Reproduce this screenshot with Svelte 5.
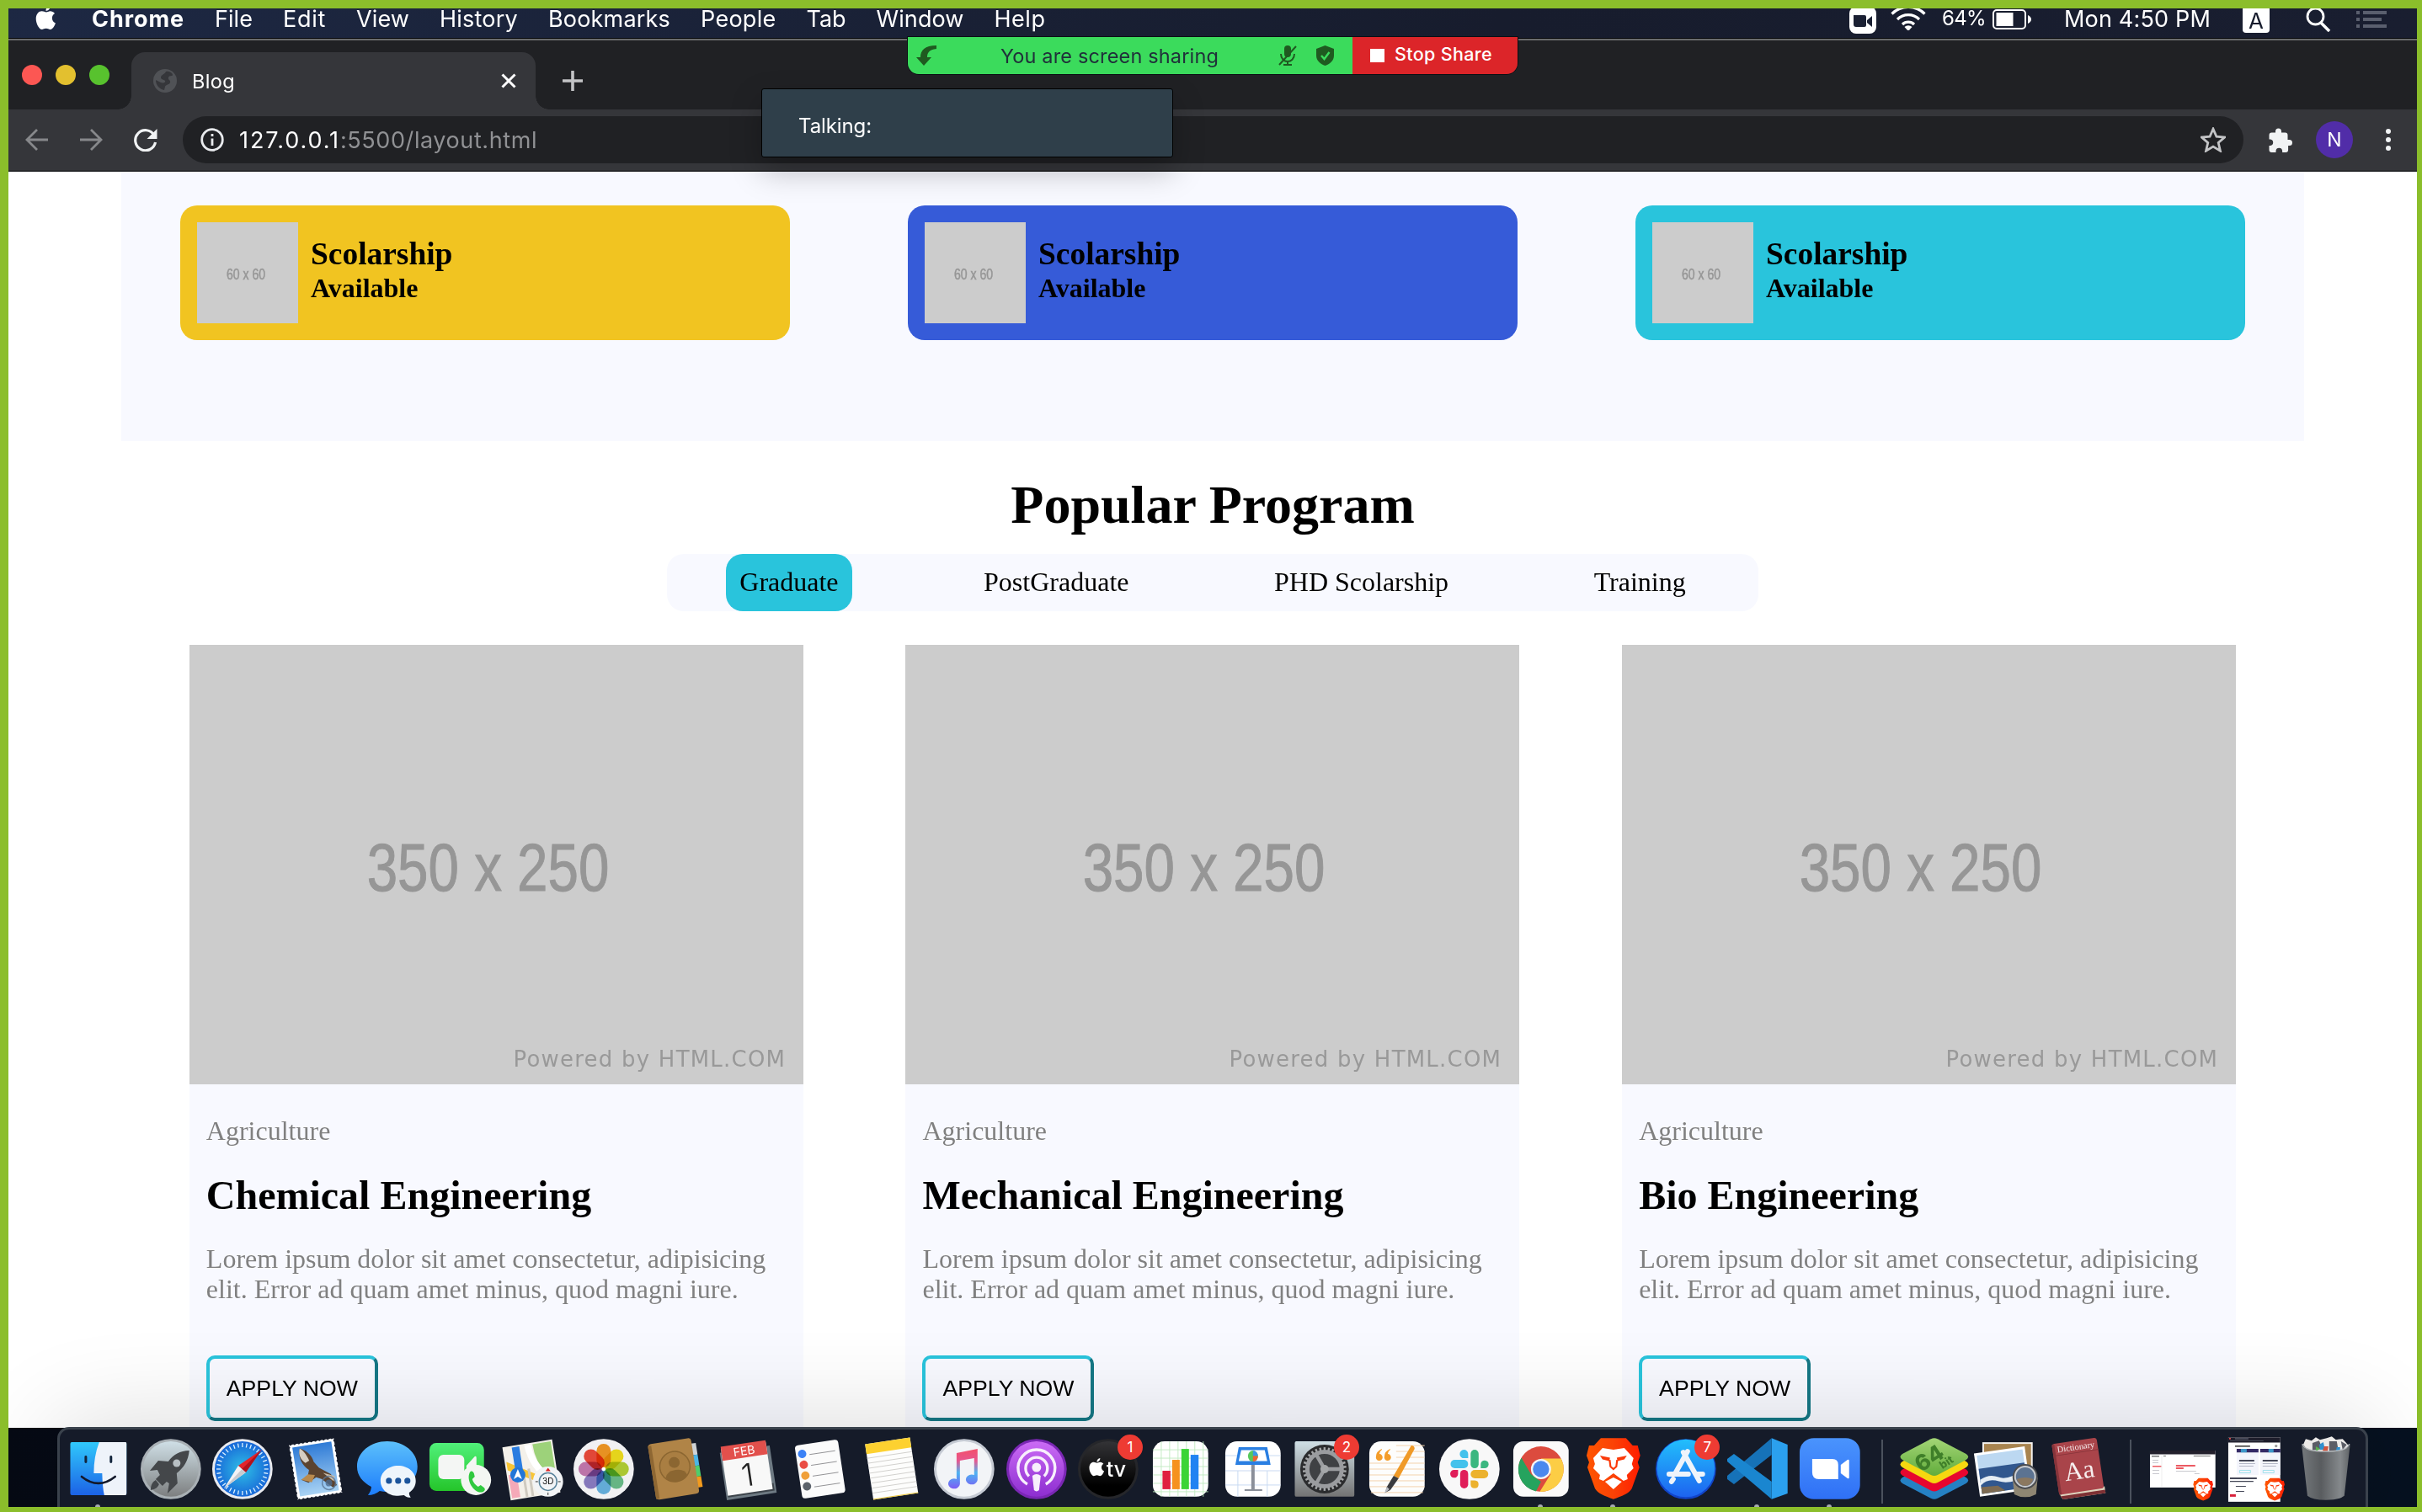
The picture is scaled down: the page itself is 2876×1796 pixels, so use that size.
<script>
  const menus = [
    { label: 'Chrome', width: 110, strong: true },
    { label: 'File', width: 45 },
    { label: 'Edit', width: 51 },
    { label: 'View', width: 63 },
    { label: 'History', width: 93 },
    { label: 'Bookmarks', width: 145 },
    { label: 'People', width: 89.5 },
    { label: 'Tab', width: 47 },
    { label: 'Window', width: 104 },
    { label: 'Help', width: 61 }
  ];

  const scholarships = [
    { tone: 'yellow' },
    { tone: 'blue' },
    { tone: 'cyan' }
  ];

  const tabs = ['Graduate', 'PostGraduate', 'PHD Scolarship', 'Training'];
  const programs = ['Chemical Engineering', 'Mechanical Engineering', 'Bio Engineering'];

  const dock = [
    { id: 'finder', running: true },
    { id: 'launchpad' },
    { id: 'safari' },
    { id: 'mail' },
    { id: 'messages' },
    { id: 'facetime' },
    { id: 'maps' },
    { id: 'photos' },
    { id: 'contacts' },
    { id: 'calendar' },
    { id: 'reminders' },
    { id: 'notes' },
    { id: 'music' },
    { id: 'podcasts' },
    { id: 'tv', badge: '1' },
    { id: 'numbers' },
    { id: 'keynote' },
    { id: 'settings', badge: '2' },
    { id: 'pages' },
    { id: 'slack' },
    { id: 'chrome', running: true },
    { id: 'brave', running: true },
    { id: 'appstore', badge: '7' },
    { id: 'vscode', running: true },
    { id: 'zoom', running: true },
    { id: 'separator' },
    { id: 'unarchiver' },
    { id: 'preview' },
    { id: 'dictionary' },
    { id: 'separator' },
    { id: 'window-wide' },
    { id: 'window-tall' },
    { id: 'trash' }
  ];

  const petals = [
    '#f59a23', '#f3e11d', '#b5d334', '#6cc08b', '#69b5e2', '#8d7fc4', '#c77bb0', '#ee4b3a'
  ];
  const ticks = Array.from({ length: 36 }, (_, i) => i * 10);
  const teeth = Array.from({ length: 30 }, (_, i) => i * 12);
  const stampEdge = Array.from({ length: 11 }, (_, i) => i);

  // Spreads a label's letters so that it fills the given width.
  function fit(node, width) {
    const natural = node.getBoundingClientRect().width;
    node.style.letterSpacing = (width - natural) / node.textContent.length + 'px';
  }
</script>

{#snippet lion()}
  <path d="M28 10h30l8 9 6 0 3 12-3 8 2 6-9 25c-3 6-12 9-22 13-10-4-19-7-22-13L12 45l2-6-3-8 3-12 6 0z" fill="url(#gBrave)" />
  <path d="M30 22l13 2 13-2 11 12-2 7 2 5-8 8 1 5-5 2-12-9-12 9-5-2 1-5-8-8 2-5-2-7z" fill="#fff" />
  <path d="M27 31l12 2.500-1 4-8-2zM59 31l-12 2.500 1 4 8-2z" fill="#fb3a0a" />
  <path d="M38.500 36l1 8 3.500 3 3.500-3 1-8" fill="none" stroke="#fb3a0a" stroke-width="2.200" />
  <path d="M43 57l10 5-10 9-10-9z" fill="#fff" />
{/snippet}

{#snippet apple()}
  <path d="M17.500 6.200c-1.700 0-3.300 1.300-4.600 1.300S9.600 6.300 7.700 6.300C4 6.300.7 9.700.7 15.200c0 6 3.900 12.800 7.100 12.800 1.600 0 2.700-1.200 4.900-1.200s3 1.200 4.800 1.200c2.900 0 5.500-4.600 6.400-7.600-2.400-1-4-3.200-4-6 0-2.400 1.200-4.300 3.100-5.500-1.300-1.800-3.400-2.700-5.500-2.700z" />
  <path d="M12.400 5.800c0-3.100 2.400-5.700 5.300-6 .2 3.300-2.400 6-5.300 6z" />
{/snippet}

<div class="screen">
  <header class="menubar">
    <svg class="apple" viewBox="0 0 25 29">{@render apple()}</svg>
    <nav class="menus">
      {#each menus as m}
        <span class="cell" style:width="{m.width}px"><span class:strong={m.strong} use:fit={m.width}>{m.label}</span></span>
      {/each}
    </nav>
    <div class="status">
      <svg class="st-cam" viewBox="0 0 32 32"><rect width="32" height="32" rx="8" fill="#fff" /><path d="M5 10h13q2 0 2 2v10q0 2-2 2H8q-3 0-3-3zM21 16l6-5v13l-6-5z" fill="#1a2033" /></svg>
      <svg class="st-wifi" viewBox="0 0 42 32"><g fill="none" stroke="#fff" stroke-width="3.200"><path d="M1.500 12.500a27.500 27.500 0 0 1 39 0" /><path d="M8 19a18.500 18.500 0 0 1 26 0" /><path d="M14 25a10 10 0 0 1 14 0" /></g><path d="M21 33l-4.500-5a6.500 6.500 0 0 1 9 0z" fill="#fff" /></svg>
      <span class="cell percent"><span use:fit={52}>64%</span></span>
      <svg class="st-batt" viewBox="0 0 46 24"><rect x="1" y="1" width="38" height="22" rx="4" fill="none" stroke="#fff" stroke-width="2" /><rect x="4.500" y="4" width="20" height="16" fill="#fff" /><path d="M42 7q4 2 4 5t-4 5z" fill="#fff" /></svg>
      <span class="cell clock"><span use:fit={174}>Mon 4:50 PM</span></span>
      <span class="input-source">A</span>
      <svg class="st-search" viewBox="0 0 30 30"><g fill="none" stroke="#fff" stroke-width="2.800"><circle cx="11.500" cy="11.500" r="9.500" /><path d="M18 19l10 10" stroke-width="3.500" /></g></svg>
      <svg class="st-list" viewBox="0 0 36 20"><path d="M0 0h4v4H0zM8 0h28v4H8zM0 8h4v4H0zM8 8h22v4H8zM0 16h4v4H0zM8 16h28v4H8z" fill="#5a5f6e" /></svg>
    </div>
  </header>

  <div class="tabstrip">
    <div class="lights"><i class="red"></i><i class="amber"></i><i class="green"></i></div>
    <div class="tab">
      <svg class="globe" viewBox="0 0 28 28"><circle cx="14" cy="14" r="14" fill="#505256" /><path d="M15 3c-1 3-6 4-6 7s4 2 5 4-2 3-5 2l-6-3c0 7 5 11 10 12l1-4c1-3 5-2 6-5s-3-3-2-6 5-1 5-3-4-5-8-4z" fill="#35363a" /></svg>
      <span class="tab-title"><span use:fit={51}>Blog</span></span>
      <svg class="close" viewBox="0 0 18 18"><path d="M1.500 1.500l15 15M16.500 1.500l-15 15" stroke="#fff" stroke-width="3" /></svg>
    </div>
    <svg class="plus" viewBox="0 0 24 24"><path d="M12 0v24M0 12h24" stroke="#c3c4c6" stroke-width="3.600" /></svg>
  </div>

  <div class="toolbar">
    <svg class="nav-icon" viewBox="0 0 28 28"><path d="M27 14H2M14 2L2 14l12 12" fill="none" stroke="#87888b" stroke-width="2.800" /></svg>
    <svg class="nav-icon fwd" viewBox="0 0 28 28"><path d="M1 14h25M14 2l12 12-12 12" fill="none" stroke="#87888b" stroke-width="2.800" /></svg>
    <svg class="nav-icon reload" viewBox="0 0 28 28"><path d="M24 8.500A12 12 0 1 0 25.500 17" fill="none" stroke="#f1f3f4" stroke-width="3.200" /><path d="M27.500 1v12h-12z" fill="#f1f3f4" /></svg>
    <div class="omnibox">
      <svg class="info" viewBox="0 0 28 28"><circle cx="14" cy="14" r="12.300" fill="none" stroke="#e8eaed" stroke-width="2.800" /><path d="M12.600 12.500h2.800v8.500h-2.800zM12.600 7h2.800v3h-2.800z" fill="#e8eaed" /></svg>
      <span class="cell host"><span use:fit={120}>127.0.0.1</span></span><span class="cell path"><span use:fit={234}>:5500/layout.html</span></span>
      <svg class="star" viewBox="0 0 28 28"><path d="M14 2l3.700 8.500 9 .8-6.900 6 2.100 9L14 21.500l-7.900 4.800 2.100-9-6.900-6 9-.8z" fill="none" stroke="#c3c4c6" stroke-width="2.600" /></svg>
    </div>
    <svg class="puzzle" viewBox="0 0 29 29"><path d="M24.500 14h-2V8.500q0-3-3-3H15V4a3.500 3.500 0 0 0-7 0v1.500H3.500q-3 0-3 3v5h1.500a3.800 3.800 0 0 1 0 7.500H.5v5q0 3 3 3h5V27.500a3.800 3.800 0 0 1 7.600 0V29h4q3 0 3-3v-5h1.400a3.500 3.500 0 0 0 0-7z" fill="#f1f3f4" /></svg>
    <span class="avatar">N</span>
    <svg class="dots" viewBox="0 0 6 26"><circle cx="3" cy="3" r="3" /><circle cx="3" cy="13" r="3" /><circle cx="3" cy="23" r="3" /></svg>
  </div>

  <main class="page">
    <section class="banner">
      {#each scholarships as s}
        <article class="offer {s.tone}">
          <svg class="thumb" viewBox="0 0 120 120">
            <rect width="120" height="120" fill="#ccc" />
            <text class="soft" x="35" y="68" font-size="17.500" stroke="#969696" stroke-width=".5" textLength="46" lengthAdjust="spacingAndGlyphs">60 x 60</text>
          </svg>
          <div class="offer-text">
            <h3>Scolarship</h3>
            <h4>Available</h4>
          </div>
        </article>
      {/each}
    </section>

    <h1>Popular Program</h1>

    <nav class="filters">
      {#each tabs as t, i}
        <span class="filter" class:active={i === 0}>{t}</span>
      {/each}
    </nav>

    <section class="programs">
      {#each programs as p}
        <article class="program">
          <svg class="cover" viewBox="0 0 730 522" preserveAspectRatio="none">
            <rect width="730" height="522" fill="#ccc" />
            <text class="soft" x="211" y="292" font-size="80" stroke="#969696" stroke-width="1" textLength="288" lengthAdjust="spacingAndGlyphs">350 x 250</text>
            <text class="soft credit" x="385" y="501" font-size="26" textLength="323">Powered by HTML.COM</text>
          </svg>
          <div class="body">
            <p class="kind">Agriculture</p>
            <h2>{p}</h2>
            <p class="blurb">Lorem ipsum dolor sit amet consectetur, adipisicing elit. Error ad quam amet minus, quod magni iure.</p>
            <button>APPLY NOW</button>
          </div>
        </article>
      {/each}
    </section>
  </main>

  <footer class="desktop">
    <div class="dock">
      {#each dock as item}
        {#if item.id === 'separator'}
          <span class="separator"></span>
        {:else}
          <div class="app">
            <svg class="icon" viewBox="0 0 86 92">
              {#if item.id === 'finder'}
                <rect x="9.500" y="15" width="67" height="63" rx="2" fill="url(#gFinder)" />
                <path d="M44 15h31q1.500 0 1.500 1.500V76q0 2-1.500 2H50q-2-8-2.500-26H37.500q0-20 6.500-37z" fill="#eef3fa" />
                <path d="M28 32.500v6M58 32.500v6" stroke="#12243c" stroke-width="3" stroke-linecap="round" />
                <path d="M23 56q20 16 40 0" fill="none" stroke="#12182a" stroke-width="2.600" stroke-linecap="round" />
              {:else if item.id === 'launchpad'}
                <circle cx="43" cy="47" r="36" fill="#a9b0b5" /><circle cx="43" cy="47" r="33" fill="url(#gSilver)" />
                <path d="M65 25c-11 0-19 5-25 13l-12-1-10 12 9-1 3 6-5 5 8 8 5-5 3 2-2 12 12-12-1-12c8-6 14-15 15-27z" fill="#44474a" />
                <path d="M25 60c-5 3-6 8-6 12 4-1 8-2 10-7z" fill="#44474a" /><circle cx="50" cy="40" r="4.500" fill="#b8c0c4" />
              {:else if item.id === 'safari'}
                <circle cx="43" cy="47" r="36" fill="#e9eaee" /><circle cx="43" cy="47" r="33" fill="url(#gSafari)" />
                {#each ticks as a}<path d="M43 16v5" stroke="#dff2ff" stroke-width="1.300" transform="rotate({a} 43 47)" />{/each}
                <path d="M66 24L38 43l9 8z" fill="#e3242b" /><path d="M66 24L42.500 47l4.500 4z" fill="#b1121c" />
                <path d="M21 70l17-27 9 8z" fill="#f3f3f5" /><path d="M21 70l21.500-23 4.500 4z" fill="#c9cbd0" />
              {:else if item.id === 'mail'}
                <g transform="rotate(-9 43 47)">
                  <rect x="17" y="14" width="54" height="66" fill="#fff" />
                  {#each stampEdge as n}<circle cx={19 + n * 5} cy="13.500" r="1.400" fill="#161c2a" /><circle cx={19 + n * 5} cy="80.500" r="1.400" fill="#161c2a" /><circle cx="16.500" cy={17 + n * 6.1} r="1.400" fill="#161c2a" /><circle cx="71.500" cy={17 + n * 6.1} r="1.400" fill="#161c2a" />{/each}
                  <rect x="20.500" y="17.500" width="47" height="59" fill="url(#gSky)" />
                  <path d="M29 20c-4 11 0 21 7 27l-3 8-8 2 8 5 10-5 6 3 12 12 5-2-5-14-13-10-5-8c-1-8-6-14-14-18z" fill="#5b4330" />
                  <path d="M29 20c-3 7-1 14 4 18l5-2c-2-6-4-12-9-16z" fill="#d5cdc2" /><path d="M25 57l9-5 8 2-5 8z" fill="#b98a4e" /><path d="M52 53l13 6-2 6z" fill="#cbbca6" />
                  <circle cx="57" cy="66" r="8" fill="none" stroke="#5a7695" stroke-width="1.600" opacity=".8" /><circle cx="57" cy="66" r="4" fill="#4e6a8c" opacity=".8" />
                </g>
              {:else if item.id === 'messages'}
                <path d="M43 14c20 0 36 13 36 30S63 74 43 74q-5 0-9-1-6 5-14 5 4-5 4-10C14 63 7 55 7 44c0-17 16-30 36-30z" fill="url(#gMsg)" />
                <path d="M56 43c12 0 21 8 21 18 0 6-3 11-8 14q0 4 2 6-5 0-8-3l-7 1c-12 0-21-8-21-18s9-18 21-18z" fill="#eef5fb" />
                <circle cx="45" cy="61" r="3.600" fill="#1b549b" /><circle cx="56" cy="61" r="3.600" fill="#1b549b" /><circle cx="67" cy="61" r="3.600" fill="#1b549b" />
              {:else if item.id === 'facetime'}
                <rect x="8" y="16" width="65" height="57" rx="8" fill="url(#gFace)" />
                <rect x="18.500" y="30" width="31" height="29" rx="6" fill="#f4f6f4" /><path d="M52 43l10-11q2-1 2 2v22q0 2-2 1L52 47z" fill="#f4f6f4" />
                <circle cx="63.500" cy="60" r="18" fill="#f3f6f2" />
                <path d="M56 51c2-2 3-2 5 1l1 4-3 3c1 4 4 7 7 9l3-2 4 3c2 2 1 4-1 5-9 4-21-12-16-23z" fill="#30c93f" />
              {:else if item.id === 'maps'}
                <g transform="rotate(-9 43 47)">
                  <rect x="13" y="16" width="60" height="64" fill="#f4f1ea" />
                  <path d="M49 18h22v36H60Q49 40 49 18z" fill="#9dd27a" /><path d="M43 18q2 28 20 42" stroke="#fff" stroke-width="8" fill="none" />
                  <path d="M15 34l56 34v8L15 44z" fill="#f8c535" /><rect x="24" y="18" width="9" height="40" fill="#2b7de0" />
                  <path d="M15 50h10v28H15z" fill="#f5a9b8" /><path d="M33 54v25M40 46v33" stroke="#cfcac0" stroke-width="3" />
                </g>
                <circle cx="27" cy="54" r="9" fill="#2276d8" /><path d="M27 47l5 12-5-3-5 3z" fill="#fff" />
                <circle cx="63" cy="62" r="18" fill="#f2f4f6" /><circle cx="63" cy="62" r="10.500" fill="none" stroke="#58839b" stroke-width="1.500" />
                <text x="63" y="65.500" font-size="10" class="mid">3D</text><path d="M63 45.500l3 4h-6z" fill="#d22" /><path d="M48 62h3M75 62h3M63 75v3" stroke="#333" />
              {:else if item.id === 'photos'}
                <circle cx="43" cy="47" r="36" fill="#f1f1f3" />
                <g class="petals">{#each petals as c, i}<rect x="34.500" y="17" width="17" height="28" rx="8.500" fill={c} transform="rotate({i * 45} 43 47)" />{/each}</g>
                <circle cx="43" cy="47" r="2" fill="#fff" />
              {:else if item.id === 'contacts'}
                <g transform="rotate(-9 43 47)">
                  <path d="M66 20h6v14h-6z" fill="#cfd3d6" /><path d="M66 34h6v13h-6z" fill="#4db5e6" /><path d="M66 47h6v13h-6z" fill="#4fce6c" /><path d="M66 60h6v13h-6z" fill="#f39b1d" />
                  <rect x="15" y="13" width="52" height="67" rx="4" fill="#b08447" /><path d="M15 15h4v64h-4z" fill="#8e6733" />
                  <circle cx="43" cy="44" r="18" fill="#a97e42" stroke="#8b6631" stroke-width="1.500" /><circle cx="43" cy="39" r="6.500" fill="#8b6631" /><path d="M30 56q2-8 13-8t13 8q-5 6-13 6t-13-6z" fill="#8b6631" />
                </g>
              {:else if item.id === 'calendar'}
                <g transform="rotate(-8.500 43 47)">
                  <path d="M13 23h60v57H13z" fill="#6e7a83" /><path d="M15 68h56v9H15z" fill="#3d444b" />
                  <rect x="15" y="18" width="54" height="57" fill="#f8f8f8" /><rect x="15" y="16" width="54" height="17" fill="#e2504c" />
                  <text x="42" y="30" font-size="14" class="mid white">FEB</text><text x="42" y="67" font-size="37" class="mid light">1</text>
                </g>
              {:else if item.id === 'reminders'}
                <g transform="rotate(-8.500 43 47)">
                  <rect x="17" y="15" width="52" height="64" rx="4" fill="#fbfbfb" />
                  <path d="M33 28h31M33 41h31M33 54h31M33 67h31" stroke="#8d8d90" stroke-width=".9" />
                  <circle cx="24.500" cy="26" r="5" fill="#3c82f6" /><circle cx="24.500" cy="39" r="5" fill="#ea4d44" /><circle cx="24.500" cy="52" r="5" fill="#f0a03a" /><circle cx="24.500" cy="65" r="5" fill="#5b626b" />
                </g>
              {:else if item.id === 'notes'}
                <g transform="rotate(-8.500 43 47)">
                  <rect x="16" y="13" width="54" height="67" fill="#fdfdfc" /><rect x="16" y="13" width="54" height="12" fill="#fdd130" />
                  <path d="M16 30h54M16 36h54M16 42h54M16 48h54M16 54h54M16 60h54M16 66h54M16 72h54" stroke="#d0cfcb" stroke-width=".9" /><path d="M16 79.500h54" stroke="#e9c332" />
                </g>
              {:else if item.id === 'music'}
                <circle cx="43" cy="47" r="36" fill="#c5cad3" /><circle cx="43" cy="47" r="33" fill="#f2f4f7" />
                <path d="M34 28l25-5v37a7 6 0 1 1-4-6V34l-17 3v28a7 6 0 1 1-4-6z" fill="url(#gMusic)" />
              {:else if item.id === 'podcasts'}
                <circle cx="43" cy="47" r="36" fill="#7a27b4" /><circle cx="43" cy="47" r="33" fill="url(#gPod)" />
                <g fill="none" stroke="#f8effc" stroke-width="3.400"><path d="M32 65a22 22 0 1 1 22 0" /><path d="M34 55.500a13 13 0 1 1 18 0" /></g>
                <circle cx="43" cy="45" r="5.500" fill="#f8effc" /><path d="M38 55q5-4 10 0l-2 17q-3 3-6 0z" fill="#f8effc" />
              {:else if item.id === 'tv'}
                <circle cx="43" cy="47" r="36" fill="#25262a" /><circle cx="43" cy="47" r="33" fill="url(#gTv)" />
                <g transform="translate(20 34) scale(.76)" fill="#fff">{@render apple()}</g>
                <text x="41" y="56" font-size="25" class="white tv">tv</text>
              {:else if item.id === 'numbers'}
                <rect x="10" y="14" width="66" height="66" rx="14" fill="#fff" />
                <path d="M20 14v66M30 14v66M40 14v66M50 14v66M60 14v66M70 14v66M10 24h66M10 34h66M10 44h66M10 54h66M10 64h66M10 74h66" stroke="#bfeabf" stroke-width=".9" />
                <path d="M21.500 49h9.500v22h-9.500z" fill="#e0213f" /><path d="M33 36h9v35h-9z" fill="#f6921e" /><path d="M44 23h9v48h-9z" fill="#3bd436" /><path d="M55 30h9.500v41H55z" fill="#2183f2" />
              {:else if item.id === 'keynote'}
                <rect x="10" y="14" width="66" height="66" rx="14" fill="#fff" />
                <path d="M10 31h66M10 49h66M10 66h66M25 49v31M60 49v31" stroke="#c9daf2" stroke-width="1" />
                <path d="M41 42h4v30h-4zM33 71h21v2H33z" fill="#8a8f99" /><path d="M26 21h34l4 21H22z" fill="#2a7fe2" /><path d="M29 24.500h28l3 13H26z" fill="#fff" />
                <ellipse cx="43" cy="31.500" rx="6" ry="6.500" fill="#57c95b" /><path d="M43 25a6 6.500 0 0 1 6 6.500h-6z" fill="#3c97e8" /><path d="M43 31.500h6a6 6.500 0 0 1-6 6.500z" fill="#ee6335" />
              {:else if item.id === 'settings'}
                <rect x="7.500" y="14" width="71" height="66" rx="2" fill="url(#gPrefs)" /><circle cx="43" cy="47" r="29" fill="#2b2c2e" />
                {#each teeth as a}<path d="M41.800 21h2.400v5h-2.400z" fill="#a5a7a9" transform="rotate({a} 43 47)" />{/each}
                <circle cx="43" cy="47" r="20.500" fill="#3f4144" stroke="#9a9c9f" stroke-width="5" /><path d="M43 47h20M43 47L33 29.500M43 47L33 64.500" stroke="#9a9c9f" stroke-width="4.500" /><circle cx="43" cy="47" r="5" fill="#a5a7a9" />
              {:else if item.id === 'pages'}
                <rect x="10" y="14" width="66" height="66" rx="14" fill="#fdfdfc" />
                <path d="M42 19h34M42 26h34M42 33h34M10 40h66M10 47h66M10 54h66M10 61h66M10 68h66M12 75h62" stroke="#f3d3ae" stroke-width="1" />
                <path d="M25 23q-7 3-7 9a4 4 0 1 0 4-3q0-3 3-5zM35 23q-7 3-7 9a4 4 0 1 0 4-3q0-3 3-5z" fill="#f49d2a" />
                <path d="M60 19q4 0 4 4L45 58l-6-3z" fill="#f09a27" /><path d="M39 55l6 3-10 14-6 3 2-7z" fill="#3a3b3f" /><path d="M31 68l3 3-6 5z" fill="#b9bcc2" />
              {:else if item.id === 'slack'}
                <circle cx="43" cy="47" r="36" fill="#f8f8f8" />
                <g fill="#44c2ec"><rect x="20.500" y="36" width="21" height="10" rx="5" /><path d="M41.500 34h-4.500a5 5 0 1 1 4.500-5z" /></g>
                <g fill="#3bb780"><rect x="44.500" y="24" width="9.500" height="22" rx="4.700" /><path d="M56.500 46v-5a4.700 4.700 0 1 1 4.700 5z" /></g>
                <g fill="#e01e5a"><rect x="32" y="48" width="9.500" height="22" rx="4.700" /><path d="M29.500 48v5a4.700 4.700 0 1 1-4.700-5z" /></g>
                <g fill="#ecb22e"><rect x="44.500" y="48" width="21" height="10" rx="5" /><path d="M44.500 60.500h5a4.700 4.700 0 1 1-5 5z" /></g>
              {:else if item.id === 'chrome'}
                <rect x="10" y="14" width="66" height="66" rx="12" fill="#fafafa" />
                <circle cx="43" cy="47" r="27" fill="#dc4b3e" /><path d="M19.600 33.500L31 53l12 9-6 11.500a27 27 0 0 1-17.400-40z" fill="#25a35e" /><path d="M43 34.500h24a27 27 0 0 1-25.500 39.500l13-21z" fill="#fccd45" />
                <circle cx="43" cy="47" r="12" fill="#f4f4f4" /><circle cx="43" cy="47" r="9.700" fill="#4a88ee" />
              {:else if item.id === 'brave'}
                {@render lion()}
              {:else if item.id === 'appstore'}
                <circle cx="43" cy="47" r="36" fill="#1144c9" /><circle cx="43" cy="46" r="34.500" fill="url(#gStore)" />
                <g stroke="#eef4fb" stroke-width="6" stroke-linecap="round"><path d="M45 26L31 51M40 27l19 34M23 53h23M55 53h8M28 59l-2 3" /></g>
              {:else if item.id === 'vscode'}
                <path d="M60 10l19 8v58l-19 7z" fill="#2ba0ee" /><path d="M60 10v20L15 65l-8-6v-4z" fill="#1672b8" /><path d="M7 35l8-6 45 33v21L7 38z" fill="#1a86d0" />
              {:else if item.id === 'zoom'}
                <rect x="7" y="10" width="72" height="73" rx="17" fill="url(#gZoom)" /><path d="M22 35h24q7 0 7 7v17H30q-8 0-8-8zM56 42l8-6q2-1 2 1v20q0 2-2 1l-8-6z" fill="#fff" />
              {:else if item.id === 'unarchiver'}
                {#each [['#2581c4', 28], ['#e7062f', 18.5], ['#f6d810', 9]] as [color, dy]}
                  <path d="M47 11l34 18q5 3.500 0 7L47 54q-4 2-8 0L5 36q-5-3.500 0-7l34-18q4-2 8 0z" fill={color} transform="translate(0 {dy})" />
                {/each}
                <path d="M47 11l34 18q5 3.500 0 7L47 54q-4 2-8 0L5 36q-5-3.500 0-7l34-18q4-2 8 0z" fill="url(#gLime)" />
                <text x="20" y="45" font-size="26" class="bits" transform="rotate(-33 34 36)">64</text><text x="47" y="46" font-size="13" class="bits" transform="rotate(-33 52 37)">bit</text>
              {:else if item.id === 'preview'}
                <rect x="15" y="15" width="60" height="50" fill="#f4f2ee" /><rect x="17" y="17" width="56" height="46" fill="#a8844f" />
                <g transform="rotate(-8 38 48)"><rect x="8" y="24" width="61" height="52" fill="#fff" /><rect x="11" y="27" width="55" height="46" fill="#bcd8f1" /><path d="M11 43h55v30H11z" fill="#31578e" /><path d="M11 56q12-6 22 0t33-5v8q-20 8-33 2t-22 2z" fill="#e5edf4" /><path d="M11 65l20 1 8 7H11z" fill="#7c6a52" /></g>
                <path d="M51 57l2 20q13 7 26 0l2-20z" fill="#8e8673" /><circle cx="66" cy="56" r="15" fill="#4a4c50" /><circle cx="66" cy="56" r="13" fill="#c9ccd0" /><circle cx="66" cy="56" r="11" fill="#5c7391" /><path d="M56 59q10-4 20 0-3 8-10 8t-10-8z" fill="#8b7860" />
              {:else if item.id === 'dictionary'}
                <g transform="rotate(-8.500 43 47)">
                  <path d="M17 72h54v8H20q-3-3-3-8z" fill="#ddd2bd" /><path d="M17 76h54v4H20z" fill="#7e3034" /><rect x="16" y="13" width="54" height="61" rx="3" fill="#a9444a" /><path d="M16 14h3v60h-3zM16 27h54v.8H16z" fill="#86343a" />
                  <text x="44" y="24" font-size="10.500" class="serif" text-anchor="middle">Dictionary</text><text x="44" y="59" font-size="31" class="serif" text-anchor="middle">Aa</text>
                </g>
              {:else if item.id === 'window-wide'}
                <rect x="4" y="25" width="78" height="44" fill="#fff" /><path d="M4 25h78v4.500H4z" fill="#23202c" />
                <path d="M6 31h9v1.500H6zM20 31h3v1H20zM56 31h20v1H56z" fill="#777" /><path d="M7 43h11v1.500H7zM35 42h23v2H35zM35 45h9v2h-9z" fill="#ec5a62" /><path d="M7 36h7v1H7zM7 39h7v1H7zM7 48h8v1H7zM7 52h8v1H7zM35 49h24v1H35zM57 52h6v1h-6z" fill="#c9c9cf" /><path d="M18 31v38" stroke="#eee" />
                <g transform="translate(51.500 54) scale(.37)">{@render lion()}</g>
              {:else if item.id === 'window-tall'}
                <rect x="12" y="9" width="62" height="77" fill="#fff" /><path d="M12 9h62v6.500H12z" fill="#1e1d2b" /><path d="M13 10h2v1.500h-2z" fill="#f55" /><path d="M20 10h16v1.500H20zM14 13h40v1H14z" fill="#555a68" />
                <path d="M20 19h18v1.500H20z" fill="#333" /><circle cx="69" cy="19.500" r="1.700" fill="#999" /><path d="M22 23h26v4.500H22zM50 23h24v4.500H50z" fill="#352a66" /><path d="M27 23h7v4.500h-7zM60 23h6v4.500h-6z" fill="#3e97c9" />
                <path d="M22 27.500h26V54H22zM50 27.500h24V54H50z" fill="#f4f5fc" /><path d="M25 36h18v2H25zM53 36h18v2H53zM14 57h32v2H14zM14 61h28v1.200H14zM21 67h12v1H21zM21 73h10v1H21z" fill="#444757" /><path d="M25 40h19v1H25zM25 43h17v1H25zM53 40h18v1H53zM53 43h16v1H53z" fill="#b4b7c6" /><path d="M25.500 48.500h13v3h-13zM53.500 48.500h13v3h-13z" fill="none" stroke="#8bdde9" stroke-width=".8" /><path d="M14 77h7v3h-7z" fill="#d8213b" />
                <g transform="translate(51.500 54) scale(.37)">{@render lion()}</g>
              {:else if item.id === 'trash'}
                <path d="M15 18l3-7 7 2 5-4 5 3 8-2 6-2 5 4 8-1 7 8-5 8H22z" fill="#eceae8" /><path d="M26 16l8-3 4 10-12 2zM46 14l9 0 2 11-11 1zM60 14l7 4-5 6z" fill="#5b5d66" /><path d="M34 18l5-3 2 9h-6zM55 21l4 0v5h-5z" fill="#2f8fce" /><path d="M40 20l5 0-1 6h-6z" fill="#d2543d" /><path d="M30 20l5 3-5 3z" fill="#57b04c" />
                <path d="M13 17q1 9 29 9t29-9l-7 62q-6 5-22 5t-22-5z" fill="url(#gTrash)" /><path d="M14 17q2 9 28 9t28-9" fill="none" stroke="#b3b7ba" stroke-width="1.500" />
              {/if}
            </svg>
            {#if item.badge}<span class="badge">{item.badge}</span>{/if}
            {#if item.running}<span class="running"></span>{/if}
          </div>
        {/if}
      {/each}
    </div>
  </footer>

  <svg class="defs" aria-hidden="true">
    <defs>
      <linearGradient id="gFinder" x1="0" y1="0" x2="0" y2="1"><stop offset="0" stop-color="#30c8fb" /><stop offset="1" stop-color="#1c62e6" /></linearGradient>
      <linearGradient id="gSilver" x1="0" y1="0" x2="0" y2="1"><stop offset="0" stop-color="#cfdfe6" /><stop offset="1" stop-color="#7d7f80" /></linearGradient>
      <radialGradient id="gSafari"><stop offset="0" stop-color="#2fc0e6" /><stop offset="1" stop-color="#1868d8" /></radialGradient>
      <linearGradient id="gSky" x1="0" y1="0" x2="0" y2="1"><stop offset="0" stop-color="#2f7bd6" /><stop offset="1" stop-color="#a9d3f4" /></linearGradient>
      <linearGradient id="gMsg" x1="0" y1="0" x2="0" y2="1"><stop offset="0" stop-color="#5cc0fb" /><stop offset="1" stop-color="#1d7dfb" /></linearGradient>
      <linearGradient id="gFace" x1="0" y1="0" x2="0" y2="1"><stop offset="0" stop-color="#50f07a" /><stop offset="1" stop-color="#25c52a" /></linearGradient>
      <linearGradient id="gMusic" x1="0" y1="0" x2="0" y2="1"><stop offset="0" stop-color="#f3506b" /><stop offset=".3" stop-color="#e6578f" /><stop offset=".6" stop-color="#4db4f2" /><stop offset="1" stop-color="#7c5cf4" /></linearGradient>
      <linearGradient id="gPod" x1="0" y1="0" x2="0" y2="1"><stop offset="0" stop-color="#cb6bf5" /><stop offset="1" stop-color="#8d2ed0" /></linearGradient>
      <linearGradient id="gTv" x1="0" y1="0" x2="0" y2="1"><stop offset="0" stop-color="#333336" /><stop offset=".8" stop-color="#000" /></linearGradient>
      <linearGradient id="gPrefs" x1="0" y1="0" x2="0" y2="1"><stop offset="0" stop-color="#cfdfe6" /><stop offset="1" stop-color="#737373" /></linearGradient>
      <linearGradient id="gBrave"><stop offset="0" stop-color="#ff5500" /><stop offset=".5" stop-color="#fb4206" /><stop offset="1" stop-color="#ff1d00" /></linearGradient>
      <linearGradient id="gStore" x1="0" y1="0" x2="0" y2="1"><stop offset="0" stop-color="#22bffc" /><stop offset="1" stop-color="#1d63f0" /></linearGradient>
      <linearGradient id="gZoom" x1="0" y1="0" x2="0" y2="1"><stop offset="0" stop-color="#4a94fd" /><stop offset="1" stop-color="#2f70f6" /></linearGradient>
      <linearGradient id="gLime" x1="0" y1="0" x2="0" y2="1"><stop offset="0" stop-color="#a3d576" /><stop offset="1" stop-color="#62ad3c" /></linearGradient>
      <linearGradient id="gTrash"><stop offset="0" stop-color="#74787b" /><stop offset=".4" stop-color="#595c5f" /><stop offset=".8" stop-color="#85898c" /><stop offset="1" stop-color="#5f6366" /></linearGradient>
    </defs>
  </svg>

  <div class="sharebar">
    <div class="sharing">
      <svg class="sh-arrow" viewBox="0 0 24 24"><path d="M24 0C10 0 5 6 5 14H0l9 10 9-10h-5c0-5 2-9 11-10z" fill="#1f5a20" /></svg>
      <span class="cell share-text"><span use:fit={259}>You are screen sharing</span></span>
      <svg class="sh-mic" viewBox="0 0 22 24"><rect x="7" y="0" width="8" height="14" rx="4" /><path d="M3 10c0 12 16 12 16 0M11 18v5M6 23h10M1 23L21 1" fill="none" stroke="#1f5a20" stroke-width="2" /></svg>
      <svg class="sh-shield" viewBox="0 0 21 24"><path d="M10.500 0L21 4v8c0 6-5 10-10.500 12C5 22 0 18 0 12V4z" /><path d="M6 12l3.500 4 6-8" fill="none" stroke="#3bdb5c" stroke-width="2.400" /></svg>
    </div>
    <div class="stop"><i></i><span class="cell stop-text"><span use:fit={116}>Stop Share</span></span></div>
  </div>
  <div class="talking"><span use:fit={87}>Talking:</span></div>
  <div class="frame"></div>
</div>

<style>
  :global(body) { margin: 0; overflow: hidden; }
  .screen { position: relative; width: 2876px; height: 1796px; display: flex; flex-direction: column; overflow: hidden; background: #fff; font-family: Inter, 'Liberation Sans', sans-serif; }
  svg { display: block; flex: none; }
  .cell { display: block; flex: none; white-space: pre; }
  .cell > span { display: inline-block; }
  .frame { position: absolute; inset: 0; border: solid #8bbe2b; border-width: 10px 6px 6px 10px; pointer-events: none; }
  .defs { position: absolute; width: 0; height: 0; }

  .menubar { box-sizing: border-box; height: 45px; flex: none; display: flex; align-items: center; padding: 0 42px; background: linear-gradient(90deg, #1d2843, #171c2d 62%, #191e30); color: #fff; font-size: 27px; line-height: 44px; }
  .apple { width: 25px; height: 29px; fill: #fff; margin-top: -2px; }
  .menus { display: flex; gap: 36px; margin-left: 42px; }
  .strong { font-weight: 700; }
  .status { margin-left: auto; display: flex; align-items: center; }
  .st-cam { width: 32px; height: 32px; margin-top: 2px; }
  .st-wifi { width: 42px; height: 32px; margin: -6px 19px 0 17px; }
  .percent { width: 52px; font-size: 24px; margin-top: -2px; }
  .st-batt { width: 46px; height: 24px; margin: 0 39px 0 8px; }
  .clock { width: 174px; }
  .input-source { width: 32px; height: 32px; margin: 0 43px 0 38px; border-radius: 4px; background: #fff; color: #171c2d; font-size: 26px; line-height: 35px; text-align: center; }
  .st-search { width: 30px; height: 30px; margin-right: 30px; }
  .st-list { width: 36px; height: 20px; }

  .tabstrip { box-sizing: border-box; height: 85px; flex: none; display: flex; align-items: flex-end; background: #202124; border-top: 1px solid #050608; box-shadow: inset 0 2px #696b6c; padding-left: 26px; }
  .lights { display: flex; gap: 16px; align-self: flex-start; margin-top: 31px; }
  .lights i { width: 24px; height: 24px; border-radius: 50%; }
  .red { background: #fc5753; }
  .amber { background: #e3c02f; }
  .green { background: #58c22e; }
  .tab { position: relative; box-sizing: border-box; width: 480px; height: 68px; margin-left: 26px; padding: 0 23px 0 26px; display: flex; align-items: center; background: #35363a; border-radius: 16px 16px 0 0; color: #fff; }
  .tab::before, .tab::after { content: ''; position: absolute; bottom: 0; width: 16px; height: 16px; }
  .tab::before { left: -16px; background: radial-gradient(circle at 0 0, transparent 15.500px, #35363a 16px); }
  .tab::after { right: -16px; background: radial-gradient(circle at 100% 0, transparent 15.500px, #35363a 16px); }
  .globe { width: 28px; height: 28px; }
  .tab-title { margin-left: 18px; width: 52px; font-size: 23.500px; white-space: pre; }
  .tab-title > span { display: inline-block; }
  .close { width: 18px; height: 18px; margin-left: auto; }
  .plus { width: 24px; height: 24px; margin: 0 0 22px 32px; }

  .toolbar { box-sizing: border-box; height: 74px; flex: none; display: flex; align-items: center; background: #35363a; border-bottom: 2px solid #28292b; padding-left: 30px; }
  .nav-icon { width: 28px; height: 28px; }
  .fwd { margin-left: 36px; }
  .reload { margin: 0 31px 0 37px; }
  .omnibox { box-sizing: border-box; width: 2447px; height: 56px; border-radius: 28px; background: #202124; display: flex; align-items: center; margin-left: -1px; padding: 0 21px; font-size: 27px; color: #909194; }
  .info { width: 28px; height: 28px; margin-right: 18px; }
  .host { width: 120px; color: #fff; }
  .path { width: 234px; }
  .star { width: 30px; height: 30px; margin-left: auto; }
  .puzzle { width: 29px; height: 29px; margin-left: 30px; }
  .avatar { width: 44px; height: 44px; margin-left: 27px; border-radius: 50%; background: #512da8; color: #fff; font-size: 23px; line-height: 44px; text-align: center; }
  .dots { width: 6px; height: 26px; margin-left: 39px; fill: #f1f3f4; }

  .page { height: 1492px; flex: none; overflow: hidden; background: #fff; font-family: 'Liberation Serif', 'Times New Roman', serif; color: #000; }
  .banner { box-sizing: border-box; width: 2592px; height: 320px; margin-left: 144px; padding-top: 40px; display: flex; justify-content: space-around; align-items: flex-start; background: #f8f9ff; }
  .offer { box-sizing: border-box; width: 724px; height: 160px; padding: 20px; border-radius: 20px; display: flex; }
  .yellow { background: #f1c421; }
  .blue { background: #365bd8; }
  .cyan { background: #29c4dc; }
  .thumb { width: 120px; height: 120px; }
  .soft { fill: #969696; font-family: 'Liberation Sans', sans-serif; filter: blur(.7px); }
  .credit { font-family: 'DejaVu Sans', sans-serif; fill: #999; }
  .offer-text { margin: 16px 0 0 15px; }
  h1, h2, h3, h4, p { margin: 0; }
  h3 { font-size: 37.440px; line-height: 44px; }
  h4 { font-size: 32px; line-height: 36px; }
  h1 { width: 2592px; margin: 39px 0 0 144px; font-size: 64px; line-height: 74px; text-align: center; }
  .filters { width: 1296px; height: 68px; margin: 21px 0 0 792px; display: flex; justify-content: space-around; background: #f8f9ff; border-radius: 20px; font-size: 32px; line-height: 66px; }
  .filter { padding: 0 16px; border-radius: 20px; }
  .active { background: #29c4dc; }
  .programs { width: 2552px; margin: 40px 0 0 164px; display: flex; justify-content: space-around; }
  .program { width: 729px; height: 1000px; background: #f8f9ff; }
  .cover { width: 729px; height: 522px; }
  .body { padding: 37px 20px 0; display: flex; flex-direction: column; align-items: flex-start; }
  .kind, .blurb { color: #808080; font-size: 32px; line-height: 36px; }
  h2 { font-size: 48px; line-height: 56px; margin: 31px 0 29px; }
  .blurb { height: 72px; }
  button { box-sizing: border-box; width: 204px; height: 78px; margin-top: 61px; padding: 0; border: 4px solid; border-color: #29c4dc #157785 #157785 #29c4dc; border-radius: 10px; background: transparent; font: 26.670px 'Liberation Sans', Arial, sans-serif; color: #000; }

  .desktop { height: 100px; flex: none; background: linear-gradient(90deg, #060a14, #07101f 50%, #061120); }
  .dock { position: relative; box-sizing: border-box; width: 2744px; height: 115px; margin: -1px 0 0 68px; padding: 0 3px; display: flex; border: 3px solid #3a424c; border-radius: 14px; background: #151b29; box-shadow: 0 0 120px rgba(0, 0, 0, .16); }
  .app { position: relative; width: 85.680px; flex: none; }
  .icon { width: 85.680px; height: 92px; }
  .separator { width: 2px; height: 76px; flex: none; margin: 12px 18px 0 18px; background: #4b525d; }
  .badge { position: absolute; left: 53.500px; top: 6px; width: 30px; height: 30px; border-radius: 50%; background: #ee3b33; color: #fff; font-size: 17px; line-height: 30px; text-align: center; }
  .running { position: absolute; left: 39px; top: 89px; width: 6px; height: 6px; border-radius: 50%; background: #a7abb2; }
  .petals rect { mix-blend-mode: multiply; }
  .mid { text-anchor: middle; }
  .white { fill: #fff; }
  .light { font-weight: 300; fill: #222; }
  .tv { font-weight: 500; }
  .bits { font-weight: 800; fill: #3f7f29; }
  .serif { font-family: 'Liberation Serif', serif; fill: #f7eeee; }

  .sharebar { position: absolute; left: 1077px; top: 43px; width: 724px; height: 44px; display: flex; border: 1px solid #0b0f14; border-radius: 0 0 14px 14px; overflow: hidden; }
  .sharing { width: 528px; display: flex; align-items: center; background: #3bdb5c; color: #20303a; font-size: 23.500px; }
  .sh-arrow { width: 24px; height: 24px; margin-left: 10px; }
  .share-text { width: 259px; margin-left: 76px; }
  .sh-mic { width: 22px; height: 24px; margin-left: 71px; fill: #1f5a20; }
  .sh-shield { width: 21px; height: 24px; margin-left: 23px; fill: #1f5a20; }
  .stop { flex: 1; display: flex; align-items: center; background: #dc2529; color: #fff; font-size: 21.500px; font-weight: 500; }
  .stop i { width: 17px; height: 16px; margin-left: 21px; background: #fff; }
  .stop-text { width: 116px; margin: -5px 0 0 12px; }
  .talking { position: absolute; left: 904px; top: 105px; box-sizing: border-box; width: 489px; height: 82px; padding-left: 43px; border: 1px solid #000; border-radius: 3px; background: #2f3f4a; color: #fff; font-size: 24px; line-height: 88px; box-shadow: 0 16px 36px rgba(0, 0, 0, .25); }
  .talking > span { display: inline-block; }
</style>
